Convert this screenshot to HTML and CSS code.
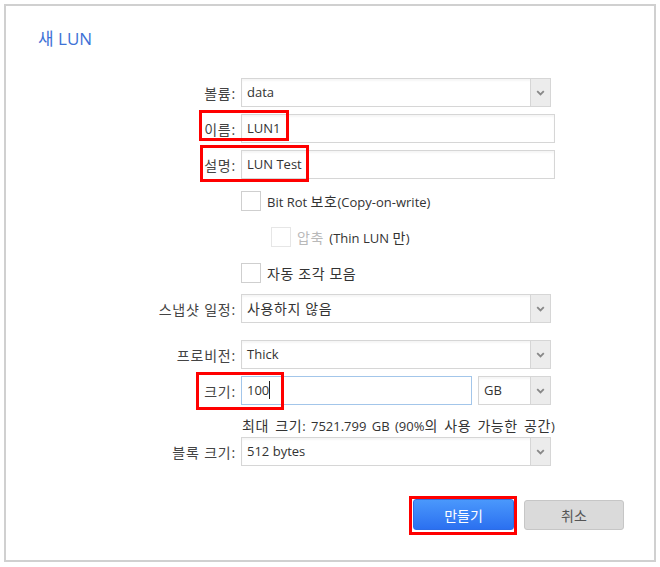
FILE: index.html
```html
<!DOCTYPE html>
<html lang="ko">
<head>
<meta charset="utf-8">
<title>새 LUN</title>
<link rel="stylesheet" href="styles.css">
</head>
<body>
<div class="panel">
  <div class="title">새 LUN</div>
  <div class="form">
    <div class="row r-first">
      <div class="label">볼륨:</div>
      <div class="select w310"><div class="val">data</div><div class="arrow"><svg width="9" height="6" viewBox="0 0 9 6"><polyline points="1.2,1.2 4.5,4.5 7.8,1.2" fill="none" stroke="#888" stroke-width="1.8"/></svg></div></div>
    </div>
    <div class="row">
      <div class="label">이름:</div>
      <div class="input w314">LUN1</div>
    </div>
    <div class="row">
      <div class="label">설명:</div>
      <div class="input w314">LUN Test</div>
    </div>
    <div class="crow c-first">
      <div class="label"></div>
      <div class="check"></div><span class="ctext">Bit Rot <span class="ko">보호</span>(Copy-on-write)</span>
    </div>
    <div class="crow c-next">
      <div class="label"></div>
      <div class="check disabled indent"></div><span class="ctext"><span class="ko muted">압축</span> (Thin LUN <span class="ko">만</span>)</span>
    </div>
    <div class="crow c-next">
      <div class="label"></div>
      <div class="check"></div><span class="ctext ko">자동 조각 모음</span>
    </div>
    <div class="row r-snap">
      <div class="label">스냅샷 일정:</div>
      <div class="select w310"><div class="val ko">사용하지 않음</div><div class="arrow"><svg width="9" height="6" viewBox="0 0 9 6"><polyline points="1.2,1.2 4.5,4.5 7.8,1.2" fill="none" stroke="#888" stroke-width="1.8"/></svg></div></div>
    </div>
    <div class="row r-prov">
      <div class="label">프로비전:</div>
      <div class="select w310"><div class="val">Thick</div><div class="arrow"><svg width="9" height="6" viewBox="0 0 9 6"><polyline points="1.2,1.2 4.5,4.5 7.8,1.2" fill="none" stroke="#888" stroke-width="1.8"/></svg></div></div>
    </div>
    <div class="row">
      <div class="label">크기:</div>
      <div class="input focus w231"><span class="caret">100</span></div>
      <div class="select w73 unit"><div class="val">GB</div><div class="arrow"><svg width="9" height="6" viewBox="0 0 9 6"><polyline points="1.2,1.2 4.5,4.5 7.8,1.2" fill="none" stroke="#888" stroke-width="1.8"/></svg></div></div>
    </div>
    <div class="hint">
      <div class="label"></div>
      <span class="hint-text"><span class="ko">최대 크기</span>: 7521.799 GB (90%<span class="ko">의 사용 가능한 공간</span>)</span>
    </div>
    <div class="row r-block">
      <div class="label">블록 크기:</div>
      <div class="select w310"><div class="val">512 bytes</div><div class="arrow"><svg width="9" height="6" viewBox="0 0 9 6"><polyline points="1.2,1.2 4.5,4.5 7.8,1.2" fill="none" stroke="#888" stroke-width="1.8"/></svg></div></div>
    </div>
    <div class="buttons">
      <button class="btn primary">만들기</button>
      <button class="btn secondary">취소</button>
    </div>
  </div>
</div>
<div class="mark m-name"></div>
<div class="mark m-desc"></div>
<div class="mark m-size"></div>
<div class="mark m-create"></div>
</body>
</html>
```
FILE: styles.css
```css
html, body {
  margin: 0;
  padding: 0;
  background: #fff;
}
body {
  position: relative;
  font-family: "Open Sans", "Noto Sans CJK KR", sans-serif;
  font-size: 13px;
  color: #333;
}
.ko {
  font-size: 14px;
  letter-spacing: 0.6px;
}
.panel {
  margin: 4px 0 0 4px;
  width: 652px;
  height: 558px;
  box-sizing: border-box;
  border: 2px solid #d0d0d0;
  background: #fff;
}
.title {
  margin: 21px 0 0 32px;
  font-size: 17px;
  line-height: 23px;
  color: #3e72d6;
}
.form {
  margin-left: 124px;
}
.row {
  display: flex;
  align-items: center;
  height: 29px;
  margin-top: 7px;
}
.r-first { margin-top: 28px; }
.r-snap { margin-top: 11px; }
.r-prov { margin-top: 17px; }
.r-block { margin-top: 3px; }
.label {
  width: 106px;
  margin-right: 5px;
  text-align: right;
  color: #444;
  font-size: 14px;
  letter-spacing: 0.8px;
  white-space: nowrap;
  flex: none;
}
.select, .input {
  box-sizing: border-box;
  height: 29px;
  border: 1px solid #d6d6d6;
  background: #fff;
  box-shadow: inset 0 2px 2px rgba(0, 0, 0, 0.04);
  flex: none;
}
.select {
  display: flex;
}
.select .val {
  flex: 1;
  padding-left: 5px;
  line-height: 27px;
  white-space: nowrap;
}
.select .arrow {
  width: 19px;
  background: #ececec;
  border-left: 1px solid #d6d6d6;
  display: flex;
  align-items: center;
  justify-content: center;
}
.input {
  padding-left: 5px;
  line-height: 27px;
}
.input.focus {
  border-color: #a3c6ea;
  box-shadow: none;
}
.caret {
  border-right: 1px solid #222;
}
.w310 { width: 310px; }
.w314 { width: 314px; }
.w231 { width: 231px; }
.w73 { width: 73px; }
.unit { margin-left: 6px; }
.crow {
  display: flex;
  align-items: center;
  height: 20px;
}
.c-first { margin-top: 12px; }
.c-next { margin-top: 16px; }
.check {
  box-sizing: border-box;
  width: 20px;
  height: 20px;
  border: 1px solid #cfcfcf;
  background: #fff;
  flex: none;
}
.check.disabled {
  border-color: #e6e6e6;
}
.check.indent {
  margin-left: 30px;
}
.ctext {
  margin-left: 6px;
  white-space: nowrap;
}
.muted {
  color: #b9b9b9;
  margin-right: 2px;
}
.hint {
  display: flex;
  align-items: center;
  height: 18px;
  margin-top: 11px;
  white-space: nowrap;
}
.hint-text {
  margin-left: 1px;
  word-spacing: 2px;
}
.buttons {
  display: flex;
  align-items: center;
  gap: 10px;
  margin-top: 33px;
  padding-left: 283px;
}
.btn {
  box-sizing: border-box;
  width: 101px;
  height: 31px;
  border-radius: 3px;
  font-family: "Open Sans", "Noto Sans CJK KR", sans-serif;
  font-size: 14px;
  padding: 0;
  cursor: pointer;
}
.primary {
  background: linear-gradient(#4a98fc, #2b70f0);
  border: 1px solid #2d6de6;
  color: #fff;
}
.secondary {
  width: 100px;
  height: 30px;
  background: #dadada;
  border: 1px solid #c6c6c6;
  color: #555;
}
.mark {
  position: absolute;
  box-sizing: border-box;
  border: 3px solid #f00;
}
.m-name { left: 199px; top: 110px; width: 90px; height: 31px; }
.m-desc { left: 200px; top: 145px; width: 109px; height: 37px; }
.m-size { left: 196px; top: 372px; width: 88px; height: 38px; }
.m-create { left: 409px; top: 496px; width: 108px; height: 39px; }
```
